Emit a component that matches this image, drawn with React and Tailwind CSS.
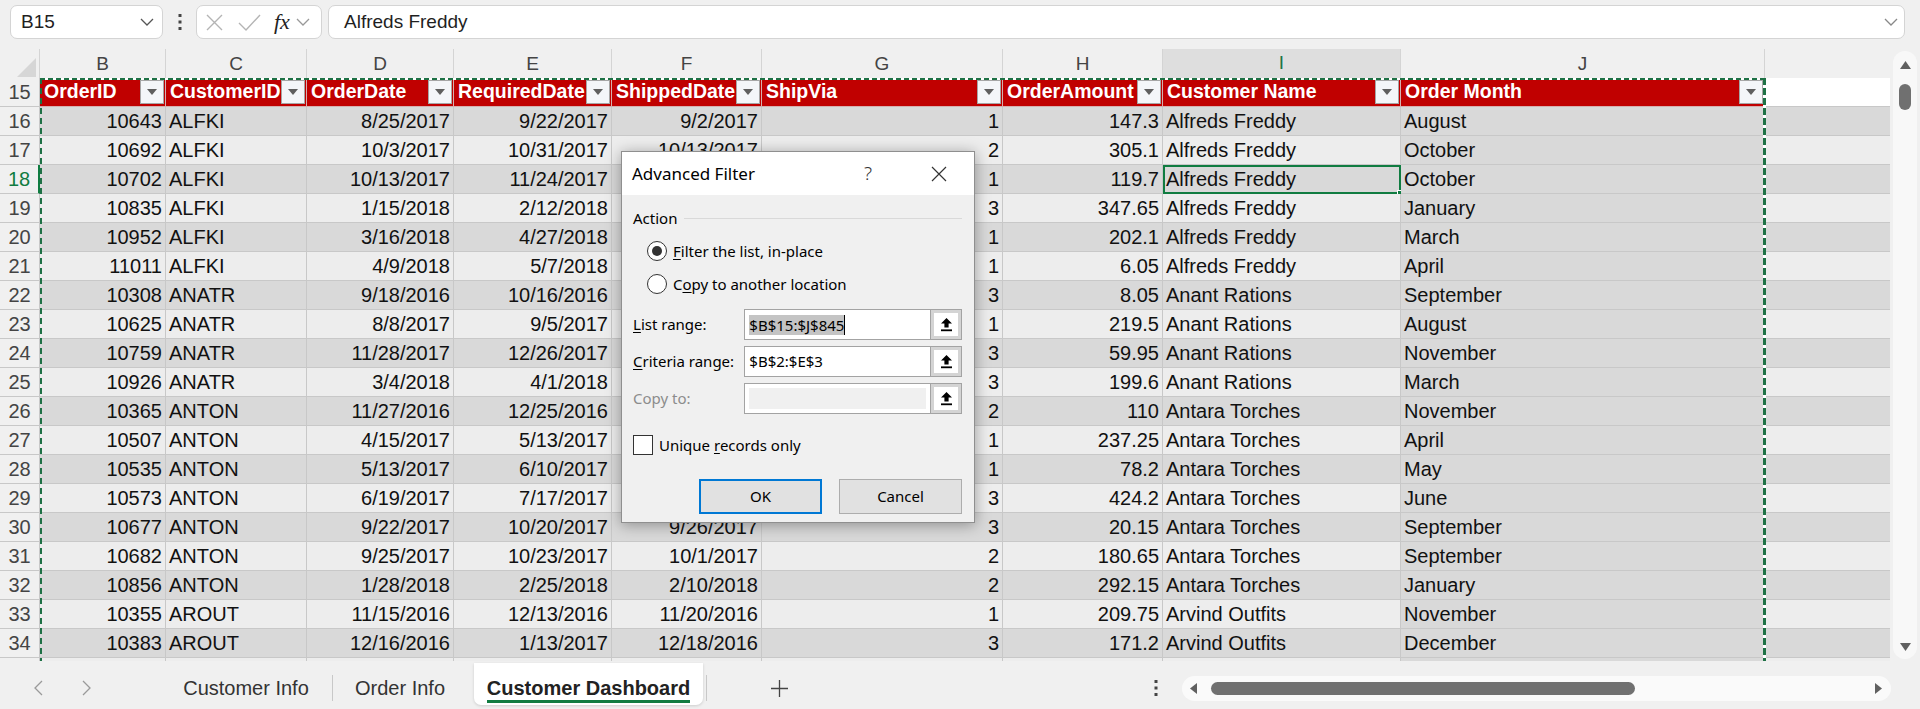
import React from 'react';

const GRID = 'grid grid-cols-[40px_126px_141px_147px_158px_150px_241px_160px_238px_364px_1fr]';

const letters = ['B', 'C', 'D', 'E', 'F', 'G', 'H', 'I', 'J'];
const headers = ['OrderID', 'CustomerID', 'OrderDate', 'RequiredDate', 'ShippedDate', 'ShipVia', 'OrderAmount', 'Customer Name', 'Order Month'];
// right aligned columns (numbers + dates)
const rightAlign = [true, false, true, true, true, true, true, false, false];

const rows = [
  [16, '10643', 'ALFKI', '8/25/2017', '9/22/2017', '9/2/2017', '1', '147.3', 'Alfreds Freddy', 'August'],
  [17, '10692', 'ALFKI', '10/3/2017', '10/31/2017', '10/13/2017', '2', '305.1', 'Alfreds Freddy', 'October'],
  [18, '10702', 'ALFKI', '10/13/2017', '11/24/2017', '10/21/2017', '1', '119.7', 'Alfreds Freddy', 'October'],
  [19, '10835', 'ALFKI', '1/15/2018', '2/12/2018', '1/21/2018', '3', '347.65', 'Alfreds Freddy', 'January'],
  [20, '10952', 'ALFKI', '3/16/2018', '4/27/2018', '3/24/2018', '1', '202.1', 'Alfreds Freddy', 'March'],
  [21, '11011', 'ALFKI', '4/9/2018', '5/7/2018', '4/13/2018', '1', '6.05', 'Alfreds Freddy', 'April'],
  [22, '10308', 'ANATR', '9/18/2016', '10/16/2016', '9/24/2016', '3', '8.05', 'Anant Rations', 'September'],
  [23, '10625', 'ANATR', '8/8/2017', '9/5/2017', '8/14/2017', '1', '219.5', 'Anant Rations', 'August'],
  [24, '10759', 'ANATR', '11/28/2017', '12/26/2017', '12/12/2017', '3', '59.95', 'Anant Rations', 'November'],
  [25, '10926', 'ANATR', '3/4/2018', '4/1/2018', '3/11/2018', '3', '199.6', 'Anant Rations', 'March'],
  [26, '10365', 'ANTON', '11/27/2016', '12/25/2016', '12/2/2016', '2', '110', 'Antara Torches', 'November'],
  [27, '10507', 'ANTON', '4/15/2017', '5/13/2017', '4/22/2017', '1', '237.25', 'Antara Torches', 'April'],
  [28, '10535', 'ANTON', '5/13/2017', '6/10/2017', '5/21/2017', '1', '78.2', 'Antara Torches', 'May'],
  [29, '10573', 'ANTON', '6/19/2017', '7/17/2017', '6/20/2017', '3', '424.2', 'Antara Torches', 'June'],
  [30, '10677', 'ANTON', '9/22/2017', '10/20/2017', '9/26/2017', '3', '20.15', 'Antara Torches', 'September'],
  [31, '10682', 'ANTON', '9/25/2017', '10/23/2017', '10/1/2017', '2', '180.65', 'Antara Torches', 'September'],
  [32, '10856', 'ANTON', '1/28/2018', '2/25/2018', '2/10/2018', '2', '292.15', 'Antara Torches', 'January'],
  [33, '10355', 'AROUT', '11/15/2016', '12/13/2016', '11/20/2016', '1', '209.75', 'Arvind Outfits', 'November'],
  [34, '10383', 'AROUT', '12/16/2016', '1/13/2017', '12/18/2016', '3', '171.2', 'Arvind Outfits', 'December'],
  [35, '', '', '', '', '', '', '', '', ''],
];

const Chevron = ({ w = 14, color = '#555' }) => (
  <svg width={w} height={w / 2 + 1} viewBox="0 0 14 8">
    <polyline points="1,1 7,7 13,1" fill="none" stroke={color} strokeWidth="1.3" />
  </svg>
);

const DotsV = () => (
  <svg width="4" height="18" viewBox="0 0 4 18">
    <rect x="0.5" y="1" width="3" height="3" fill="#444" />
    <rect x="0.5" y="7.5" width="3" height="3" fill="#444" />
    <rect x="0.5" y="14" width="3" height="3" fill="#444" />
  </svg>
);

function TopBar() {
  return (
    <div className="h-[49px] shrink-0 flex items-start pt-[5px] pl-[10px] pr-[15px]">
      <div className="w-[153px] h-[34px] bg-white border border-[#d4d4d4] rounded-[7px] flex items-center justify-between pl-[10px] pr-[8px]">
        <span className="text-[19px] text-[#1f1f1f]">B15</span>
        <Chevron />
      </div>
      <div className="w-[33px] h-[34px] flex items-center justify-center">
        <DotsV />
      </div>
      <div className="w-[126px] h-[34px] bg-white border border-[#d4d4d4] rounded-[7px] flex items-center">
        <svg className="ml-[9px]" width="17" height="17" viewBox="0 0 17 17">
          <path d="M1 1L16 16M16 1L1 16" stroke="#b4b4b4" strokeWidth="1.4" />
        </svg>
        <svg className="ml-[15px]" width="23" height="17" viewBox="0 0 23 17">
          <polyline points="1,9 8,16 22,1" fill="none" stroke="#b4b4b4" strokeWidth="1.4" />
        </svg>
        <span className="ml-[13px] text-[22px] italic font-['Liberation_Serif',serif] text-[#222] leading-none">fx</span>
        <span className="ml-[6px]"><Chevron w={14} color="#999" /></span>
      </div>
      <div className="flex-1 ml-[6px] h-[34px] bg-white border border-[#d4d4d4] rounded-[7px] flex items-center justify-between pl-[15px] pr-[6px]">
        <span className="text-[19px] text-[#1f1f1f]">Alfreds Freddy</span>
        <Chevron color="#888" />
      </div>
    </div>
  );
}

function ColumnHeaders() {
  return (
    <div className={`${GRID} h-[29px] shrink-0 border-b border-[#c2c2c2]`}>
      <div className="border-r border-[#d4d4d4] bg-[#f0f0f0] flex items-end justify-end p-[3px]">
        <svg width="19" height="19" viewBox="0 0 20 20">
          <polygon points="20,0 20,20 0,20" fill="#d6d6d6" />
        </svg>
      </div>
      {letters.map((l) => (
        <div
          key={l}
          className={`flex items-center justify-center text-[19px] border-r border-[#d4d4d4] ${
            l === 'I' ? 'bg-[#dedede] text-[#217346] border-b-2 border-b-[#107c41]' : 'bg-[#f0f0f0] text-[#444]'
          }`}
        >
          {l}
        </div>
      ))}
      <div className="bg-[#f0f0f0]" />
    </div>
  );
}

function FilterButton() {
  return (
    <span className="ml-auto w-[24px] h-[24px] shrink-0 bg-[#f4f6f9] border border-[#a6a6a6] flex items-center justify-center">
      <svg width="10" height="6" viewBox="0 0 10 6">
        <path d="M0 0H10L5 6Z" fill="#5f5f5f" />
      </svg>
    </span>
  );
}

function HeaderRow() {
  return (
    <div className={GRID}>
      <div className="h-[29px] border-r border-b border-[#c8c8c8] bg-[#f0f0f0] flex items-center justify-center text-[20px] text-[#444]">
        15
      </div>
      {headers.map((h) => (
        <div
          key={h}
          className="h-[29px] bg-[#c00000] border-r border-b border-[#d6b0b0] flex items-center pl-[4px] pr-[1px] text-white font-bold text-[19.5px] whitespace-nowrap"
        >
          <span>{h}</span>
          <FilterButton />
        </div>
      ))}
      <div className="h-[29px] bg-white border-b border-[#c8c8c8]" />
    </div>
  );
}

function DataRow({ r }) {
  const [n, ...cells] = r;
  const dark = (n - 16) % 2 === 0;
  const band = dark ? 'bg-[#d9d9d9]' : 'bg-[#ededed]';
  const active = n === 18;
  // last row is only a sliver under the sheet tabs, so no number is visible
  const label = n === 35 ? '' : n;
  return (
    <div className={GRID}>
      <div
        className={`h-[29px] border-b border-[#c8c8c8] bg-[#f0f0f0] flex items-center justify-center text-[20px] ${
          active ? 'text-[#107c41] border-r-2 border-r-[#107c41]' : 'text-[#444] border-r'
        }`}
      >
        {label}
      </div>
      {cells.map((c, k) => {
        const isActive = active && k === 7;
        const bg = k === 8 ? 'bg-[#d9d9d9]' : band;
        return (
          <div
            key={k}
            className={`relative h-[29px] border-r border-b border-[#c8c8c8] ${bg} flex items-center px-[3px] text-[20px] text-[#111] whitespace-nowrap ${
              rightAlign[k] ? 'justify-end' : 'justify-start'
            } ${isActive ? 'outline-2 outline-[#107c41] -outline-offset-2' : ''}`}
          >
            {c}
            {isActive && (
              <span className="absolute right-[-4px] bottom-[-4px] w-[7px] h-[7px] bg-[#107c41] border border-white" />
            )}
          </div>
        );
      })}
      <div className={`h-[29px] border-b border-[#c8c8c8] ${band}`} />
    </div>
  );
}

const UploadIcon = () => (
  <svg width="13" height="15" viewBox="0 0 13 15">
    <path d="M6.5 1L12 6.5H8.6V10.5H4.4V6.5H1Z" fill="#000" />
    <rect x="1" y="12.4" width="11" height="1.8" fill="#000" />
  </svg>
);

function RangeInput({ children, disabled }) {
  return (
    <div className="w-[219px] h-[31px] border border-[#a3a3a3] bg-white flex">
      <div className={`flex-1 flex items-center ${disabled ? 'p-[4px]' : 'pl-[4px]'}`}>
        {disabled ? <div className="w-full h-full bg-[#f0f0f0]" /> : children}
      </div>
      <div className="w-[31px] h-full border-l border-[#a3a3a3] bg-[#d4d4d4] p-[3px]">
        <div className="w-full h-full bg-white flex items-center justify-center">
          <UploadIcon />
        </div>
      </div>
    </div>
  );
}

function Radio({ checked }) {
  return (
    <span className="w-[20px] h-[20px] rounded-full border border-[#333] bg-white flex items-center justify-center shrink-0">
      {checked && <span className="w-[10px] h-[10px] rounded-full bg-[#333]" />}
    </span>
  );
}

function AdvancedFilterDialog() {
  return (
    <div className="absolute left-[621px] top-[151px] w-[354px] h-[372px] bg-[#f0f0f0] border border-[#8f8f8f] shadow-[0_2px_14px_rgba(0,0,0,0.35)] font-['Noto_Sans',sans-serif] text-[15px] text-black">
      <div className="h-[43px] bg-white flex items-center pl-[10px] pr-[27px]">
        <span className="flex-1 text-[17px]">Advanced Filter</span>
        <span className="w-[20px] text-center text-[19px] font-light text-[#333]">?</span>
        <svg className="ml-[53px]" width="16" height="16" viewBox="0 0 16 16">
          <path d="M1 1L15 15M15 1L1 15" stroke="#333" strokeWidth="1.2" />
        </svg>
      </div>
      <div className="pl-[11px] pr-[12px]">
        <div className="mt-[13px] h-[20px] flex items-center">
          <span>Action</span>
          <span className="flex-1 ml-[7px] h-px bg-[#d9d9d9]" />
        </div>
        <div className="mt-[11px] h-[24px] flex items-center pl-[14px]">
          <Radio checked />
          <span className="ml-[6px]">
            <span className="underline underline-offset-2">F</span>ilter the list, in-place
          </span>
        </div>
        <div className="mt-[9px] h-[24px] flex items-center pl-[14px]">
          <Radio />
          <span className="ml-[6px]">
            C<span className="underline underline-offset-2">o</span>py to another location
          </span>
        </div>
        <div className="mt-[13px] flex items-center">
          <span className="w-[112px]">
            <span className="underline underline-offset-2">L</span>ist range:
          </span>
          <RangeInput>
            <span className="bg-[#c4c4c4] leading-[20px]">$B$15:$J$845</span>
            <span className="w-px h-[20px] bg-black" />
          </RangeInput>
        </div>
        <div className="mt-[6px] flex items-center">
          <span className="w-[112px]">
            <span className="underline underline-offset-2">C</span>riteria range:
          </span>
          <RangeInput>
            <span>$B$2:$E$3</span>
          </RangeInput>
        </div>
        <div className="mt-[6px] flex items-center">
          <span className="w-[112px] text-[#8c8c8c]">Copy to:</span>
          <RangeInput disabled />
        </div>
        <div className="mt-[21px] h-[20px] flex items-center">
          <span className="w-[20px] h-[20px] border border-[#333] bg-white shrink-0" />
          <span className="ml-[6px]">
            Unique <span className="underline underline-offset-2">r</span>ecords only
          </span>
        </div>
        <div className="mt-[24px] flex justify-end gap-[17px]">
          <button className="w-[123px] h-[35px] border-2 border-[#0078d4] bg-[#e1e1e1]">OK</button>
          <button className="w-[123px] h-[35px] border border-[#adadad] bg-[#e1e1e1]">Cancel</button>
        </div>
      </div>
    </div>
  );
}

function VScroll() {
  return (
    <div className="w-[30px] shrink-0 pt-[2px] pb-[2px] pl-[3px] pr-[3px]">
      <div className="h-full rounded-[12px] bg-[#f8f8f8] flex flex-col items-center pt-[10px] pb-[8px]">
        <svg width="11" height="8" viewBox="0 0 11 8">
          <path d="M0 8H11L5.5 0Z" fill="#606060" />
        </svg>
        <div className="mt-[15px] w-[12px] h-[26px] rounded-full bg-[#707070]" />
        <div className="flex-1" />
        <svg width="11" height="8" viewBox="0 0 11 8">
          <path d="M0 0H11L5.5 8Z" fill="#606060" />
        </svg>
      </div>
    </div>
  );
}

function SheetTabs() {
  return (
    <div className="h-[48px] shrink-0 flex items-stretch bg-[#f0f0f0]">
      <div className="w-[160px] flex items-center pt-[6px]">
        <svg className="ml-[34px]" width="9" height="16" viewBox="0 0 9 16">
          <polyline points="8,1 1,8 8,15" fill="none" stroke="#9a9a9a" strokeWidth="1.3" />
        </svg>
        <svg className="ml-[39px]" width="9" height="16" viewBox="0 0 9 16">
          <polyline points="1,1 8,8 1,15" fill="none" stroke="#9a9a9a" strokeWidth="1.3" />
        </svg>
      </div>
      <div className="w-[172px] flex items-center justify-center pt-[6px] text-[20px] text-[#333]">Customer Info</div>
      <div className="w-px h-[26px] self-center mt-[6px] bg-[#c8c8c8]" />
      <div className="w-[134px] flex items-center justify-center pt-[6px] text-[20px] text-[#333]">Order Info</div>
      <div className="ml-[7px] mt-[2px] mb-[4px] w-[229px] bg-white rounded-b-[7px] shadow-[0_1px_3px_rgba(0,0,0,0.15)] flex items-end justify-center pb-[2px]">
        <span className="text-[20px] font-bold text-[#222] border-b-[3px] border-[#107c41] leading-[24px]">
          Customer Dashboard
        </span>
      </div>
      <div className="ml-[3px] w-px h-[26px] self-center mt-[6px] bg-[#c8c8c8]" />
      <div className="w-[144px] flex items-center justify-center pt-[6px]">
        <svg width="17" height="17" viewBox="0 0 17 17">
          <path d="M8.5 0V17M0 8.5H17" stroke="#444" strokeWidth="1.3" />
        </svg>
      </div>
      <div className="flex-1" />
      <div className="w-[26px] flex items-center justify-center mr-[13px] pt-[6px]">
        <DotsV />
      </div>
      <div className="w-[709px] h-[25px] self-center mt-[6px] mr-[29px] rounded-full bg-[#fafafa] flex items-center">
        <svg className="ml-[8px]" width="7" height="11" viewBox="0 0 7 11">
          <path d="M7 0V11L0 5.5Z" fill="#606060" />
        </svg>
        <div className="ml-[14px] w-[424px] h-[13px] rounded-full bg-[#707070]" />
        <div className="flex-1" />
        <svg className="mr-[9px]" width="7" height="11" viewBox="0 0 7 11">
          <path d="M0 0V11L7 5.5Z" fill="#606060" />
        </svg>
      </div>
    </div>
  );
}

export default function App() {
  return (
    <div className="relative w-[1920px] h-[709px] overflow-hidden bg-[#f0f0f0] flex flex-col font-['Liberation_Sans',Arial,sans-serif]">
      <TopBar />
      <div className="flex-1 flex min-h-0">
        <div className="w-[1890px] flex flex-col min-h-0">
          <ColumnHeaders />
          <div className="relative flex-1 overflow-hidden bg-[#ededed]">
            <HeaderRow />
            {rows.map((r) => (
              <DataRow key={r[0]} r={r} />
            ))}
            {/* copy marquee (marching ants) around the table */}
            <div className="absolute left-[40px] top-0 w-[1726px] h-[2px] bg-[repeating-linear-gradient(90deg,#1e7145_0_5px,#ffffff_5px_8px)]" />
            <div className="absolute left-[40px] top-0 bottom-0 w-[2px] bg-[repeating-linear-gradient(180deg,#1e7145_0_6px,transparent_6px_10px)]" />
            <div className="absolute left-[1763px] top-0 bottom-0 w-[3px] bg-[repeating-linear-gradient(180deg,#1e7145_0_7px,#ffffff_7px_10px)]" />
          </div>
        </div>
        <VScroll />
      </div>
      <SheetTabs />
      <AdvancedFilterDialog />
    </div>
  );
}
